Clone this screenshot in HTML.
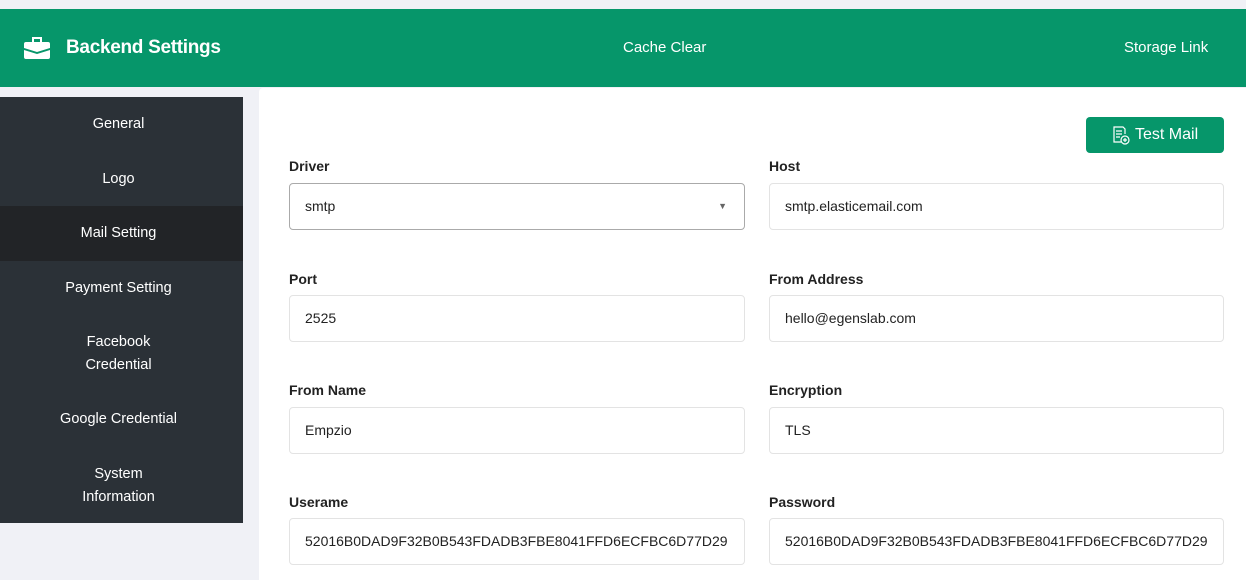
<!DOCTYPE html>
<html><head><style>
body{margin:0;width:1246px;height:580px;background:#f0f1f6;font-family:"Liberation Sans",sans-serif;position:relative;overflow:hidden}
.hdr{position:absolute;top:9px;left:0;width:1246px;height:78px;background:#06966a;color:#fff}
.side{position:absolute;left:0;top:97px;width:243px;height:426px;background:#2b3137}
.side div{position:absolute;left:0;width:237px;text-align:center;color:#fff;font-size:14.5px;line-height:23px}
.main{position:absolute;left:259px;top:88px;width:987px;height:492px;background:#fff;border-top-left-radius:4px}
.lbl{position:absolute;font-size:14px;font-weight:bold;color:#222}
.inp{position:absolute;height:45px;border:1px solid #e3e3e3;border-radius:4px;box-sizing:content-box;font-size:14px;color:#222;line-height:45px;padding-left:15px;width:439px}
</style></head><body>
<div class="hdr">
<svg style="position:absolute;left:23px;top:27px" width="28" height="24" viewBox="0 0 28 24"><rect x="9" y="1" width="10" height="2" fill="#fff"/><rect x="9" y="1" width="2" height="5" fill="#fff"/><rect x="17" y="1" width="2" height="5" fill="#fff"/><path d="M1 8a2 2 0 0 1 2-2h22a2 2 0 0 1 2 2v4L14 16 1 12z" fill="#fff"/><path d="M1 14l13 4 13-4v7a2 2 0 0 1-2 2H3a2 2 0 0 1-2-2z" fill="#fff"/></svg>
<div style="position:absolute;left:66px;top:28px;font-size:19px;font-weight:bold;letter-spacing:-0.3px">Backend Settings</div>
<div style="position:absolute;left:623px;top:30px;font-size:15px">Cache Clear</div>
<div style="position:absolute;left:1124px;top:30px;font-size:15px">Storage Link</div>
</div>
<div class="side">
<div style="top:16px">General</div>
<div style="top:71px">Logo</div>
<div style="top:109px;height:55px;width:243px;background:#222427"></div>
<div style="top:125px">Mail Setting</div>
<div style="top:180px">Payment Setting</div>
<div style="top:234px">Facebook<br>Credential</div>
<div style="top:311px">Google Credential</div>
<div style="top:366px">System<br>Information</div>
</div>
<div class="main"></div>
<div style="position:absolute;left:1086px;top:117px;width:138px;height:36px;background:#06966a;border-radius:4px;color:#fff;font-size:16px;line-height:36px">
<svg style="position:absolute;left:26px;top:9px" width="18" height="19" viewBox="0 0 18 19" fill="none" stroke="#fff" stroke-width="1.2"><path d="M9 16H2V1h9l2 2v5"/><path d="M4 5h6M4 8h6M4 11h4"/><circle cx="13" cy="14" r="4"/><path d="M13 12v4M11 14h4"/></svg>
<span style="position:absolute;left:49px">Test Mail</span></div>
<div class="lbl" style="left:289px;top:158px">Driver</div>
<div class="inp" style="left:289px;top:183px;border-color:#aaa">smtp<span style="position:absolute;right:17px;top:0;font-size:9px;color:#666">▼</span></div>
<div class="lbl" style="left:769px;top:158px">Host</div>
<div class="inp" style="left:769px;top:183px;width:438px">smtp.elasticemail.com</div>
<div class="lbl" style="left:289px;top:271px">Port</div>
<div class="inp" style="left:289px;top:295px">2525</div>
<div class="lbl" style="left:769px;top:271px">From Address</div>
<div class="inp" style="left:769px;top:295px;width:438px">hello@egenslab.com</div>
<div class="lbl" style="left:289px;top:382px">From Name</div>
<div class="inp" style="left:289px;top:407px">Empzio</div>
<div class="lbl" style="left:769px;top:382px">Encryption</div>
<div class="inp" style="left:769px;top:407px;width:438px">TLS</div>
<div class="lbl" style="left:289px;top:494px">Userame</div>
<div class="inp" style="left:289px;top:518px">52016B0DAD9F32B0B543FDADB3FBE8041FFD6ECFBC6D77D29</div>
<div class="lbl" style="left:769px;top:494px">Password</div>
<div class="inp" style="left:769px;top:518px;width:438px">52016B0DAD9F32B0B543FDADB3FBE8041FFD6ECFBC6D77D29</div>
</body></html>
